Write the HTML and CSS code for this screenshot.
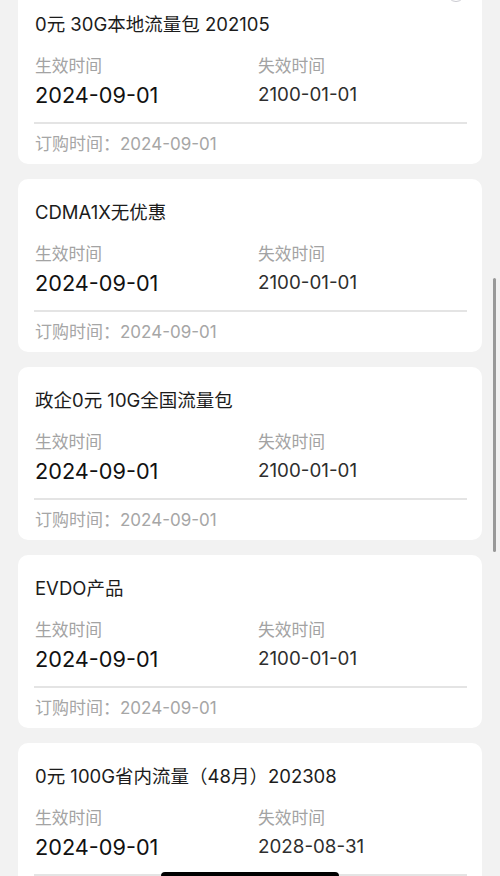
FILE: index.html
```html
<!DOCTYPE html>
<html lang="zh">
<head>
<meta charset="utf-8">
<title>订购列表</title>
<link rel="stylesheet" href="styles.css">
</head>
<body>
<div class="list">
  <div class="card">
    <span class="badge"></span>
    <div class="title">0元 30G本地流量包 202105</div>
    <div class="grid">
      <div class="col"><div class="label">生效时间</div><div class="date big">2024-09-01</div></div>
      <div class="col"><div class="label">失效时间</div><div class="date">2100-01-01</div></div>
    </div>
    <div class="divider"></div>
    <div class="foot">订购时间：2024-09-01</div>
  </div>
  <div class="card">
    <div class="title">CDMA1X无优惠</div>
    <div class="grid">
      <div class="col"><div class="label">生效时间</div><div class="date big">2024-09-01</div></div>
      <div class="col"><div class="label">失效时间</div><div class="date">2100-01-01</div></div>
    </div>
    <div class="divider"></div>
    <div class="foot">订购时间：2024-09-01</div>
  </div>
  <div class="card">
    <div class="title">政企0元 10G全国流量包</div>
    <div class="grid">
      <div class="col"><div class="label">生效时间</div><div class="date big">2024-09-01</div></div>
      <div class="col"><div class="label">失效时间</div><div class="date">2100-01-01</div></div>
    </div>
    <div class="divider"></div>
    <div class="foot">订购时间：2024-09-01</div>
  </div>
  <div class="card">
    <div class="title">EVDO产品</div>
    <div class="grid">
      <div class="col"><div class="label">生效时间</div><div class="date big">2024-09-01</div></div>
      <div class="col"><div class="label">失效时间</div><div class="date">2100-01-01</div></div>
    </div>
    <div class="divider"></div>
    <div class="foot">订购时间：2024-09-01</div>
  </div>
  <div class="card">
    <div class="title">0元 100G省内流量（48月）202308</div>
    <div class="grid">
      <div class="col"><div class="label">生效时间</div><div class="date big">2024-09-01</div></div>
      <div class="col"><div class="label">失效时间</div><div class="date">2028-08-31</div></div>
    </div>
    <div class="divider"></div>
    <div class="foot">订购时间：2024-09-01</div>
  </div>
</div>
<div class="scrollbar"></div>
<div class="home"></div>
</body>
</html>
```
FILE: styles.css
```css
html, body {
  margin: 0;
  padding: 0;
  height: 876px;
  overflow: hidden;
  background: #f2f2f2;
  font-family: "Inter", "Noto Sans CJK SC", sans-serif;
}
.list {
  display: flex;
  flex-direction: column;
  gap: 15px;
  padding: 0 18px;
  margin-top: -9px;
}
.card {
  position: relative;
  background: #fff;
  border-radius: 10px;
  height: 173px;
  box-sizing: border-box;
  padding: 20px 16px 0 17px;
}
.badge {
  position: absolute;
  top: -7px;
  right: 17px;
  width: 18px;
  height: 18px;
  border-radius: 50%;
  border: 1.5px solid #c9c9d0;
  box-sizing: border-box;
  clip-path: inset(7px 0 0 0);
}
.title {
  font-size: 18.5px;
  line-height: 26px;
  color: #1c1c1c;
  white-space: nowrap;
}
.grid {
  display: grid;
  grid-template-columns: 223px 1fr;
  margin-top: 18px;
}
.label {
  font-size: 16.8px;
  line-height: 22px;
  color: #a3a3a3;
}
.date {
  margin-top: 5px;
  font-size: 18.8px;
  line-height: 26px;
  color: #2e2e2e;
}
.date.big {
  font-size: 21.7px;
  color: #111;
}
.divider {
  height: 1.5px;
  background: #e4e4e4;
  margin: 14px -1px 0 -1px;
}
.foot {
  margin-top: 9px;
  font-size: 17px;
  line-height: 22px;
  color: #a6a6a6;
}
.scrollbar {
  position: absolute;
  left: 493px;
  top: 278px;
  width: 3px;
  height: 274px;
  border-radius: 2px;
  background: #999;
}
.home {
  position: absolute;
  left: 161px;
  top: 872px;
  width: 178px;
  height: 8px;
  border-radius: 4px;
  background: #000;
}
```
